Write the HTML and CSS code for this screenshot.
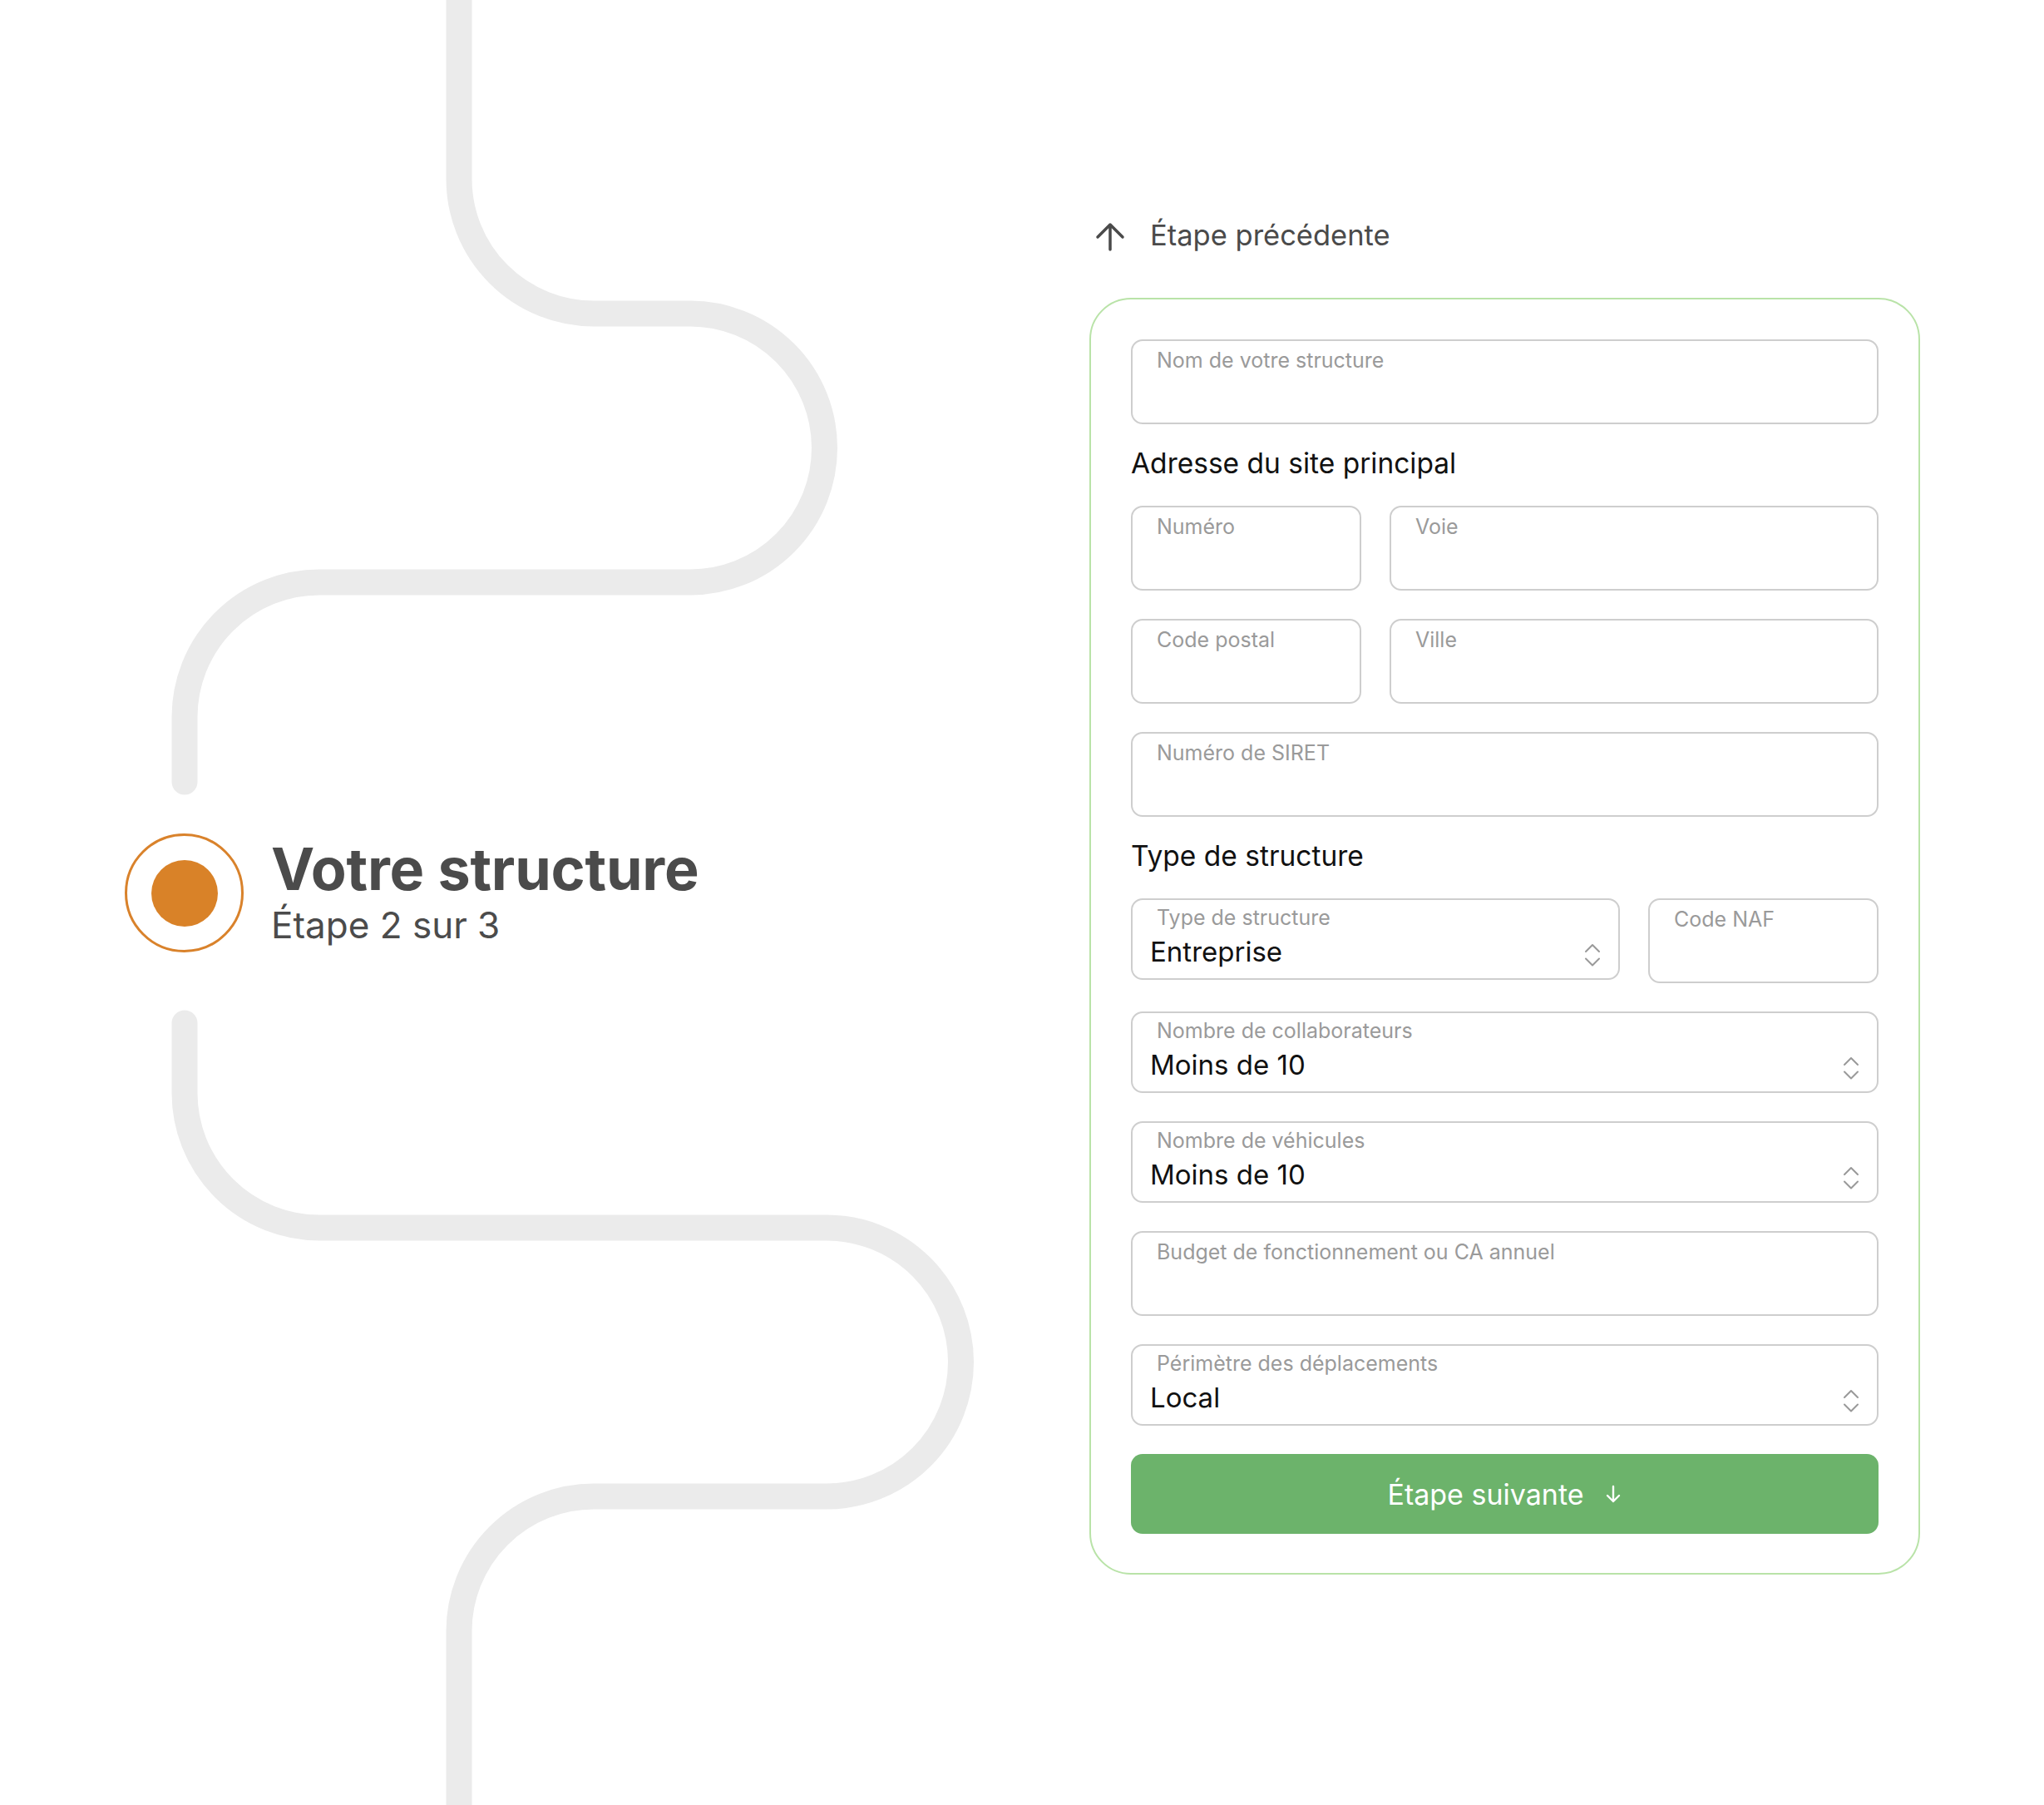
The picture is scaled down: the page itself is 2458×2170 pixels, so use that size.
FILE: index.html
```html
<!DOCTYPE html>
<html lang="fr">
<head>
    <meta charset="UTF-8">
    <meta name="viewport" content="width=device-width, initial-scale=1.0">
    <title>Votre structure</title>
    <link rel="stylesheet" href="styles.css">
</head>
<body>
<div class="page">
    <aside class="journey">
        <svg class="journey-path" width="1310" height="2170" viewBox="0 0 1310 2170" aria-hidden="true">
            <path d="M552 -40 V215 A162 162 0 0 0 714 377 H830 A161.5 161.5 0 0 1 830 700 H384 A162 162 0 0 0 222 862 V940"/>
            <path d="M222 1230 V1314 A162 162 0 0 0 384 1476 H994 A161.5 161.5 0 0 1 994 1799 H714 A162 162 0 0 0 552 1961 V2220"/>
        </svg>
        <div class="step">
            <div class="step-marker"><span class="step-dot"></span></div>
            <div class="step-text">
                <h1>Votre structure</h1>
                <p>Étape 2 sur 3</p>
            </div>
        </div>
    </aside>

    <main class="form-col">
        <a class="prev-link" href="#">
            <svg width="36" height="36" viewBox="0 0 36 36" aria-hidden="true">
                <path d="M18 4v30M3 19L18 4l15 15"/>
            </svg>
            Étape précédente
        </a>

        <form class="card">
            <label class="field">
                <span class="field-label">Nom de votre structure</span>
                <input type="text">
            </label>

            <h2>Adresse du site principal</h2>

            <div class="row">
                <label class="field">
                    <span class="field-label">Numéro</span>
                    <input type="text">
                </label>
                <label class="field">
                    <span class="field-label">Voie</span>
                    <input type="text">
                </label>
            </div>

            <div class="row">
                <label class="field">
                    <span class="field-label">Code postal</span>
                    <input type="text">
                </label>
                <label class="field">
                    <span class="field-label">Ville</span>
                    <input type="text">
                </label>
            </div>

            <label class="field">
                <span class="field-label">Numéro de SIRET</span>
                <input type="text">
            </label>

            <h2>Type de structure</h2>

            <div class="row row-type">
                <div class="select">
                    <div class="select-body">
                        <span class="field-label">Type de structure</span>
                        <span class="select-value">Entreprise</span>
                    </div>
                    <svg class="select-arrows" width="20" height="28" viewBox="0 0 20 28" aria-hidden="true">
                        <path d="M2 10l8-8 8 8M2 18.5l8 8 8-8"/>
                    </svg>
                </div>
                <label class="field">
                    <span class="field-label">Code NAF</span>
                    <input type="text">
                </label>
            </div>

            <div class="select">
                <div class="select-body">
                    <span class="field-label">Nombre de collaborateurs</span>
                    <span class="select-value">Moins de 10</span>
                </div>
                <svg class="select-arrows" width="20" height="28" viewBox="0 0 20 28" aria-hidden="true">
                    <path d="M2 10l8-8 8 8M2 18.5l8 8 8-8"/>
                </svg>
            </div>

            <div class="select">
                <div class="select-body">
                    <span class="field-label">Nombre de véhicules</span>
                    <span class="select-value">Moins de 10</span>
                </div>
                <svg class="select-arrows" width="20" height="28" viewBox="0 0 20 28" aria-hidden="true">
                    <path d="M2 10l8-8 8 8M2 18.5l8 8 8-8"/>
                </svg>
            </div>

            <label class="field">
                <span class="field-label">Budget de fonctionnement ou CA annuel</span>
                <input type="text">
            </label>

            <div class="select">
                <div class="select-body">
                    <span class="field-label">Périmètre des déplacements</span>
                    <span class="select-value">Local</span>
                </div>
                <svg class="select-arrows" width="20" height="28" viewBox="0 0 20 28" aria-hidden="true">
                    <path d="M2 10l8-8 8 8M2 18.5l8 8 8-8"/>
                </svg>
            </div>

            <button type="submit" class="next-btn">
                Étape suivante
                <svg width="22" height="24" viewBox="0 0 22 24" aria-hidden="true">
                    <path d="M11 3v18M4 14l7 7 7-7"/>
                </svg>
            </button>
        </form>
    </main>
</div>
</body>
</html>
```

FILE: styles.css
```css
body {
    margin: 0;
    padding: 0;
    background-color: white;
    font-family: Inter, "Noto Sans", sans-serif;
    color: #111;
    overflow: hidden;
}
.page {
    display: grid;
    grid-template-columns: 1310px 1fr;
    height: 2170px;
}

/* left column: the journey line and the current step */
.journey {
    position: relative;
    overflow: hidden;
}
.journey-path {
    position: absolute;
    top: 0;
    left: 0;
}
.journey-path path {
    fill: none;
    stroke: #ebebeb;
    stroke-width: 31;
    stroke-linecap: round;
}
.step {
    position: relative;
    display: flex;
    align-items: center;
    gap: 33px;
    padding: 1002px 0 0 150px;
}
.step-marker {
    width: 143px;
    height: 143px;
    box-sizing: border-box;
    border: 3px solid #d9822b;
    border-radius: 50%;
    background-color: white;
    display: flex;
    align-items: center;
    justify-content: center;
}
.step-dot {
    width: 80px;
    height: 80px;
    border-radius: 50%;
    background-color: #d98228;
}
.step-text h1 {
    margin: 0;
    font-size: 70px;
    line-height: 68px;
    font-weight: 700;
    color: #4b4b4b;
    letter-spacing: -0.2px;
}
.step-text p {
    margin: 9px 0 0;
    font-size: 44px;
    line-height: 48px;
    color: #4b4b4b;
}

/* right column: the form */
.form-col {
    padding-top: 262px;
}
.prev-link {
    display: flex;
    align-items: center;
    gap: 30px;
    height: 40px;
    margin-left: 7px;
    margin-bottom: 56px;
    font-size: 34.5px;
    color: #4a4a4a;
    text-decoration: none;
}
.prev-link svg {
    margin-top: 3px;
}
.prev-link path {
    fill: none;
    stroke: #4a4a4a;
    stroke-width: 3.5;
    stroke-linecap: round;
    stroke-linejoin: round;
}
.card {
    display: flex;
    flex-direction: column;
    gap: 34px;
    width: 999px;
    box-sizing: border-box;
    padding: 48px 48px 47px;
    border: 2px solid #b9e3a8;
    border-radius: 50px;
}
.card h2 {
    margin: 0;
    font-size: 33.5px;
    line-height: 30px;
    font-weight: 400;
    color: #111;
    position: relative;
    top: -2px;
}
.row {
    display: grid;
    grid-template-columns: 277px 1fr;
    gap: 34px;
    align-items: start;
}
.row-type {
    grid-template-columns: 1fr 277px;
}
.field,
.select {
    box-sizing: border-box;
    border: 2px solid #cecece;
    border-radius: 14px;
    background-color: white;
}
.field {
    display: flex;
    flex-direction: column;
    height: 102px;
    padding: 9px 22px 0 21px;
}
.field-label {
    font-size: 25px;
    line-height: 28px;
    color: #9a9a9a;
    padding-left: 8px;
}
.field input {
    flex: 1;
    min-width: 0;
    border: none;
    outline: none;
    padding: 0;
    background: transparent;
    font-family: inherit;
    font-size: 33px;
    color: #111;
}
.select {
    display: flex;
    align-items: flex-end;
    height: 98px;
    padding: 7px 21px 12px 21px;
}
.select-body {
    flex: 1;
    display: flex;
    flex-direction: column;
}
.select-value {
    margin-top: 7px;
    font-size: 33px;
    line-height: 40px;
    color: #111;
}
.select-arrows {
    margin-bottom: 2px;
}
.select-arrows path {
    fill: none;
    stroke: #999;
    stroke-width: 2;
    stroke-linecap: round;
    stroke-linejoin: round;
}
.next-btn {
    display: flex;
    align-items: center;
    justify-content: center;
    gap: 24px;
    height: 96px;
    border: none;
    border-radius: 14px;
    background-color: #6cb36b;
    color: white;
    font-family: inherit;
    font-size: 34px;
    cursor: pointer;
}
.next-btn path {
    fill: none;
    stroke: white;
    stroke-width: 2.4;
    stroke-linecap: round;
    stroke-linejoin: round;
}
```
